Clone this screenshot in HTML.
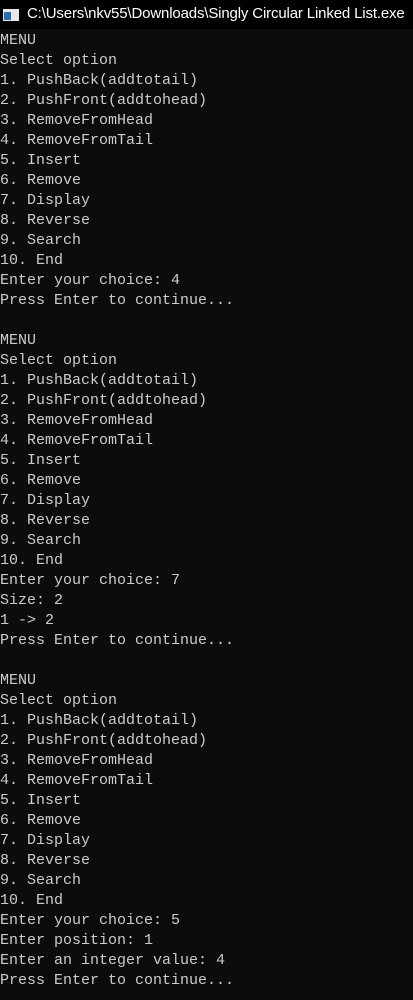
<!DOCTYPE html>
<html><head><meta charset="utf-8"><style>
html,body{margin:0;padding:0;width:413px;height:1000px;overflow:hidden;background:#0c0c0c;}
.t{position:absolute;left:0;top:0;width:413px;height:29px;background:#000;}
.t span{position:absolute;left:27px;top:5px;color:#fff;font:15px "Liberation Sans",sans-serif;letter-spacing:-0.15px;white-space:nowrap;}
.ic{position:absolute;left:3px;top:9px;width:16px;height:12px;background:#e8e8e8;}
.ic i{position:absolute;left:1px;top:3px;width:7px;height:8px;background:#2a6fb0;}
pre{position:absolute;left:0;top:31px;margin:0;color:#cccccc;font:15px/20px "Liberation Mono",monospace;}
</style></head><body>
<div class="t"><div class="ic"><i></i></div><span>C:\Users\nkv55\Downloads\Singly Circular Linked List.exe</span></div>
<pre>MENU
Select option
1. PushBack(addtotail)
2. PushFront(addtohead)
3. RemoveFromHead
4. RemoveFromTail
5. Insert
6. Remove
7. Display
8. Reverse
9. Search
10. End
Enter your choice: 4
Press Enter to continue...

MENU
Select option
1. PushBack(addtotail)
2. PushFront(addtohead)
3. RemoveFromHead
4. RemoveFromTail
5. Insert
6. Remove
7. Display
8. Reverse
9. Search
10. End
Enter your choice: 7
Size: 2
1 -&gt; 2
Press Enter to continue...

MENU
Select option
1. PushBack(addtotail)
2. PushFront(addtohead)
3. RemoveFromHead
4. RemoveFromTail
5. Insert
6. Remove
7. Display
8. Reverse
9. Search
10. End
Enter your choice: 5
Enter position: 1
Enter an integer value: 4
Press Enter to continue...</pre>
</body></html>
